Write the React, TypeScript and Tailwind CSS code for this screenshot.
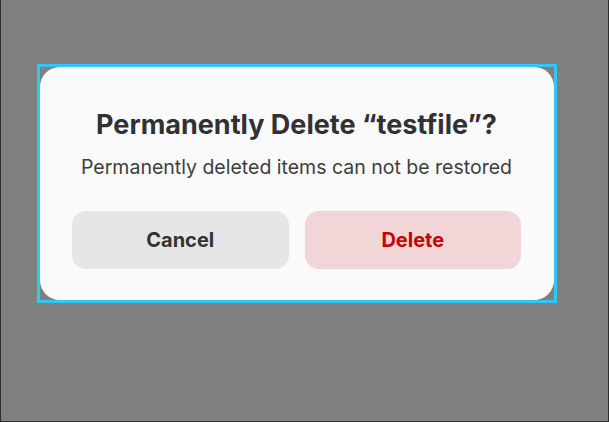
import React from "react";

const font = { fontFamily: "Inter, 'Noto Sans', sans-serif" };

export default function App() {
  return (
    <div
      className="w-[609px] h-[422px] bg-[#808080] border-l border-r border-b border-[#2e2e2e] pl-[36px] pt-[64px]"
      style={font}
    >
      <div className="w-[520px] h-[239px] border-[3px] border-[#2fc6f8]">
        <div className="h-full bg-[#fafafa] rounded-[20px] pl-8 pr-[33px] pt-10 pb-[31px] flex flex-col items-center">
          <h2 className="text-[27px] leading-[36px] font-bold text-[#313135] whitespace-nowrap">
            Permanently Delete “testfile”?
          </h2>
          <p className="mt-[11px] text-[19.5px] leading-[26px] text-[#3d3d40] whitespace-nowrap">
            Permanently deleted items can not be restored
          </p>
          <div className="mt-[31px] w-full grid grid-cols-2 gap-4">
            <button className="h-[58px] rounded-[14px] bg-[#e6e6e6] text-[20px] font-bold text-[#333336]">
              Cancel
            </button>
            <button className="h-[58px] rounded-[14px] bg-[#f2d5d6] text-[20px] font-bold text-[#c80000]">
              Delete
            </button>
          </div>
        </div>
      </div>
    </div>
  );
}
